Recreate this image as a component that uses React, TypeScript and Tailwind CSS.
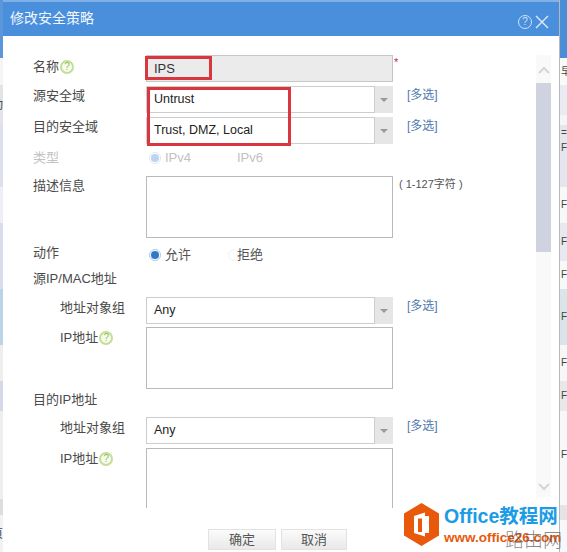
import React from "react";

const font = "font-['Liberation_Sans','Noto_Sans_CJK_SC',sans-serif]";

function Help() {
  return (
    <span className="ml-px inline-flex h-[14px] w-[14px] shrink-0 items-center justify-center rounded-full border-2 border-[#c3df97] bg-[#f8fbf0] text-[10px] leading-none text-[#8fbc4f]">
      ?
    </span>
  );
}

function Multi() {
  return <span className="ml-[14px] mt-[1px] text-[12px] leading-[16px] text-[#4f78ad]">[多选]</span>;
}

function Select({ value }: { value: string }) {
  return (
    <div className="flex h-[27px] w-[247px] shrink-0 bg-[#e6e6e6]">
      <span className="flex-1 border border-[#cdcdcd] bg-white pl-[7px] text-[12.500px] leading-[24px] text-[#222]">{value}</span>
      <span className="flex w-[18px] items-center justify-center">
        <span className="h-0 w-0 border-x-[4px] border-t-[4px] border-x-transparent border-t-[#999]" />
      </span>
    </div>
  );
}

function Label({ children, sub }: { children: React.ReactNode; sub?: boolean }) {
  return (
    <div className={`flex w-[113px] shrink-0 items-center text-[13px] leading-[20px] text-[#4a4a4a] ${sub ? "pl-[27px] pt-px" : ""}`}>
      {children}
    </div>
  );
}

function Area({ h }: { h: string }) {
  return <div className={`w-[247px] shrink-0 border border-[#b9b9b9] bg-white ${h}`} />;
}

function Radio({ on, muted }: { on?: boolean; muted?: boolean }) {
  return (
    <span
      className={`flex h-[12px] w-[12px] items-center justify-center rounded-full border ${
        on ? (muted ? "border-[#dde8f5] bg-white" : "border-[#a9c8ea] bg-white") : "border-[#f2f2f2] bg-white"
      }`}
    >
      {on && <span className={`h-[8px] w-[8px] rounded-full ${muted ? "bg-[#bcd4ee]" : "bg-[#2f79c6]"}`} />}
    </span>
  );
}

function RadioRow({ a, b, muted }: { a: string; b: string; muted?: boolean }) {
  const txt = muted ? "text-[#c2c2c2]" : "text-[#555]";
  return (
    <div className={`flex items-center pl-[3px] text-[13px] leading-[20px] ${txt}`}>
      <Radio on muted={muted} />
      <span className="ml-[4px] w-[63px]">{a}</span>
      {muted ? <span className="w-[9px]" /> : <Radio />}
      <span className={muted ? "ml-0" : "ml-[-3px]"}>{b}</span>
    </div>
  );
}

const rightRows = [
  ["h-[58px]", "bg-[#4a8ed8]", ""],
  ["h-[27px]", "bg-[#fafafa]", "早"],
  ["h-[30px]", "bg-[#e8ebef]", ""],
  ["h-[10px]", "bg-[#f4f5f6]", ""],
  ["h-[16px]", "bg-[#e3e6ec]", "="],
  ["h-[14px]", "bg-[#e3e6ec]", "F"],
  ["h-[32px]", "bg-[#e3e6ec]", ""],
  ["h-[36px]", "bg-[#f7f8f8]", "F"],
  ["h-[38px]", "bg-[#e6e9ee]", "F"],
  ["h-[28px]", "bg-[#f7f8f8]", "F"],
  ["h-[56px]", "bg-[#d9e5e8]", "F"],
  ["h-[36px]", "bg-[#f7f7f7]", "F"],
  ["h-[30px]", "bg-[#e8e8ea]", "F"],
  ["h-[88px]", "bg-[#f8f8f8]", "F"],
  ["h-[6px]", "bg-[#f8f8f8]", ""],
  ["h-[15px]", "bg-[#e4e4e4]", ""],
  ["h-[32px]", "bg-[#f8f8f8]", ""],
];

const leftRows = [
  ["h-[58px]", "bg-[#5b96d8]", ""],
  ["h-[27px]", "bg-[#f5f5f5]", ""],
  ["h-[40px]", "bg-[#e2e4e8]", "动"],
  ["h-[62px]", "bg-[#dcdfee]", ""],
  ["h-[36px]", "bg-[#eeeef4]", ""],
  ["h-[66px]", "bg-[#d8dcec]", ""],
  ["h-[56px]", "bg-[#bcd4e8]", ""],
  ["h-[36px]", "bg-[#eeeeee]", ""],
  ["h-[30px]", "bg-[#d5d8e8]", ""],
  ["h-[88px]", "bg-[#eeeeee]", ""],
  ["h-[16px]", "bg-[#dddddd]", ""],
  ["h-[37px]", "bg-[#f2f2f2]", "页"],
];

export default function App() {
  return (
    <div className={`relative flex h-[552px] w-[567px] overflow-hidden bg-white ${font}`}>
      <div className="flex w-[3px] shrink-0 flex-col overflow-hidden">
        {leftRows.map(([h, bg, t], i) => (
          <div key={i} className={`flex shrink-0 items-center justify-end overflow-hidden text-[12px] leading-none text-[#445] ${h} ${bg}`}>
            {t && <span className="shrink-0">{t}</span>}
          </div>
        ))}
      </div>

      <div className="flex w-[556px] shrink-0 flex-col bg-white">
        <header className="flex h-[36px] shrink-0 items-center justify-between border-t-2 border-[#7fb1e6] bg-[#4a8fdc] pl-[7px] pr-[10px]">
          <h1 className="mb-[2px] text-[14px] font-normal text-[#f2f7fd]">修改安全策略</h1>
          <div className="flex items-center gap-[3px] pt-[6px]">
            <span className="flex h-[14px] w-[14px] items-center justify-center rounded-full border-[1.5px] border-[#cfe2f7] text-[10px] leading-none text-[#cfe2f7]">
              ?
            </span>
            <svg width="14" height="14" viewBox="0 0 14 14" fill="none" stroke="#dcebfa" strokeWidth="1.4">
              <path d="M1 1 13 13M13 1 1 13" />
            </svg>
          </div>
        </header>

        <div className="flex h-[472px] shrink-0 overflow-hidden">
          <div className="w-[533px] shrink-0 pl-[30px] pt-[19px]">
            <div className="flex items-start">
              <div className="mt-[2px]">
                <Label>
                  名称
                  <Help />
                </Label>
              </div>
              <div className="flex h-[27px] w-[247px] shrink-0 border border-[#c6c6c6] bg-[#ebebeb] pl-[7px] text-[13px] leading-[25px] text-[#333]">
                IPS
              </div>
              <span className="ml-[1px] text-[11px] leading-[14px] text-[#c0283c]">*</span>
            </div>
            <div className="mt-[4px] flex items-start">
              <Label>源安全域</Label>
              <Select value="Untrust" />
              <Multi />
            </div>
            <div className="mt-[4px] flex items-start">
              <Label>目的安全域</Label>
              <Select value="Trust, DMZ, Local" />
              <Multi />
            </div>
            <div className="mt-[4px] flex items-center">
              <div className="flex w-[113px] shrink-0 items-center text-[13px] leading-[20px] text-[#c2c2c2]">类型</div>
              <RadioRow a="IPv4" b="IPv6" muted />
            </div>
            <div className="mt-[8px] flex items-start">
              <Label>描述信息</Label>
              <Area h="h-[62px]" />
              <span className="ml-[6px] text-[11px] leading-[16px] text-[#555]">( 1-127字符 )</span>
            </div>
            <div className="mt-[5px] flex items-start">
              <Label>动作</Label>
              <div className="mt-[2px]">
                <RadioRow a="允许" b="拒绝" />
              </div>
            </div>
            <div className="mt-[4px]">
              <Label>
                <span className="whitespace-nowrap">源IP/MAC地址</span>
              </Label>
            </div>
            <div className="mt-[8px] flex items-start">
              <Label sub>
                <span className="whitespace-nowrap">地址对象组</span>
              </Label>
              <Select value="Any" />
              <Multi />
            </div>
            <div className="mt-[3px] flex items-start">
              <Label sub>
                IP地址
                <Help />
              </Label>
              <Area h="h-[62px]" />
            </div>
            <div className="mt-px">
              <Label>目的IP地址</Label>
            </div>
            <div className="mt-[7px] flex items-start">
              <Label sub>
                <span className="whitespace-nowrap">地址对象组</span>
              </Label>
              <Select value="Any" />
              <Multi />
            </div>
            <div className="mt-[4px] flex items-start">
              <Label sub>
                IP地址
                <Help />
              </Label>
              <div className="h-[70px] w-[247px] shrink-0 border border-[#b9b9b9] bg-white" />
            </div>
          </div>

          <div className="mt-[19px] flex h-[442px] w-[15px] shrink-0 flex-col bg-[#f9f9fa]">
            <div className="flex h-[28px] items-center justify-center pt-[2px]">
              <svg width="12" height="8" viewBox="0 0 12 8" fill="none" stroke="#d5d5d5" strokeWidth="2">
                <path d="M1 7 6 2l5 5" />
              </svg>
            </div>
            <div className="h-[169px] bg-[#ced3df]" />
            <div className="flex-1" />
            <div className="flex h-[20px] items-center justify-center">
              <svg width="12" height="8" viewBox="0 0 12 8" fill="none" stroke="#d5d5d5" strokeWidth="2">
                <path d="M1 1l5 5 5-5" />
              </svg>
            </div>
          </div>
        </div>

        <footer className="flex flex-1 items-start pl-[205px] pt-[21px]">
          <button className="h-[21px] w-[68px] border border-[#e2e2e2] bg-gradient-to-b from-[#fbfbfb] to-[#e9e9e9] text-[13px] leading-[19px] text-[#555]">
            确定
          </button>
          <button className="ml-[5px] h-[21px] w-[66px] border border-[#e2e2e2] bg-gradient-to-b from-[#fbfbfb] to-[#e9e9e9] text-[13px] leading-[19px] text-[#555]">
            取消
          </button>
        </footer>
      </div>

      <div className="flex min-w-0 flex-1 flex-col border-l border-[#b5b9bf]">
        {rightRows.map(([h, bg, t], i) => (
          <div key={i} className={`flex shrink-0 items-center overflow-hidden pl-[1px] text-[10px] leading-none text-[#444] ${h} ${bg}`}>
            {t && <span className="shrink-0">{t}</span>}
          </div>
        ))}
      </div>

      {/* annotation boxes drawn over the form */}
      <div className="absolute left-[145px] top-[56px] h-[24px] w-[67px] border-[3px] border-[#d9363f]" />
      <div className="absolute left-[147px] top-[87px] h-[59px] w-[144px] border-[3px] border-[#d9363f]" />

      {/* watermark */}
      <div className="absolute left-[403px] top-[503px] flex h-[43px] w-[164px] items-start">
        <svg width="37" height="43" viewBox="0 0 37 43" className="shrink-0">
          <path d="M18.5 0 36 10.5v22L18.5 43 1 32.5v-22z" fill="#e8590c" />
          <path d="M11 13 22 9.500v24L11 30z" fill="#fff" />
          <path d="M15 15.500h4v13.500h-4z" fill="#e8590c" />
          <path d="M22 13h4v17h-4z" fill="#fff" />
        </svg>
        <div className="ml-[4px] min-w-0 whitespace-nowrap">
          <div className="text-[19.500px] font-bold leading-[26px] text-[#1c9be6]">Office教程网</div>
          <div className="mt-[2px] text-[13.500px] font-bold leading-[14px] text-[#e8590c]">www.office26.com</div>
        </div>
      </div>
      <div className="absolute left-[505px] top-[530px] text-[19px] font-light leading-[22px] text-[#555]/70">路由网</div>
    </div>
  );
}
